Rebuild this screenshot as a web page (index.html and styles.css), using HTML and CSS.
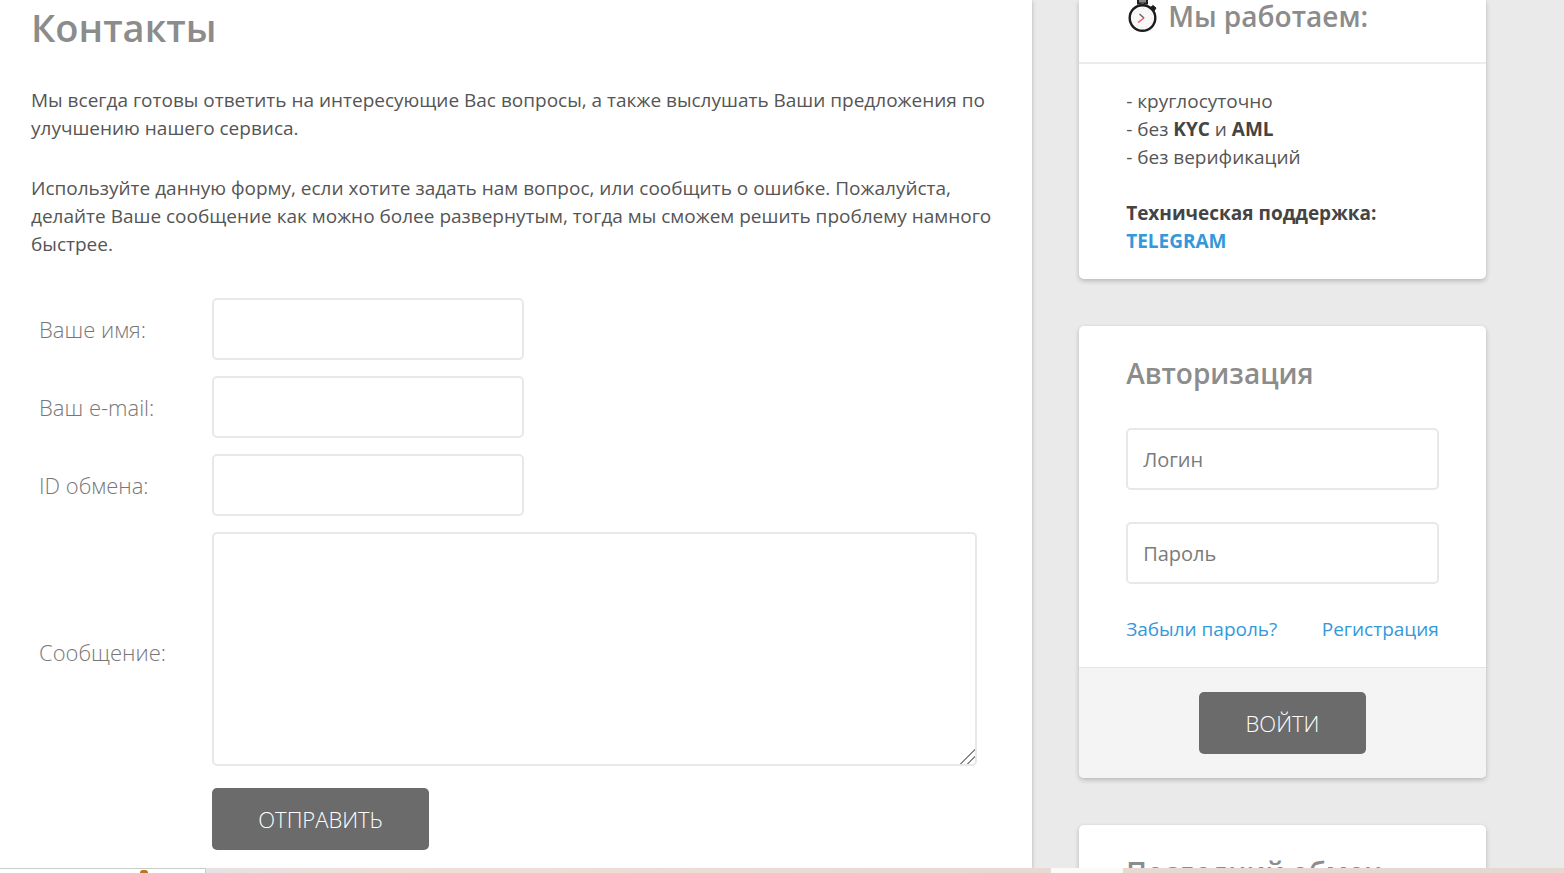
FILE: index.html
```html
<!DOCTYPE html>
<html lang="ru">
<head>
<meta charset="utf-8">
<meta name="viewport" content="width=device-width, initial-scale=1">
<title>Контакты</title>
<link rel="stylesheet" href="styles.css">
</head>
<body>
<div class="viewport">
  <div class="page">
    <main class="content">
      <h1 class="content-title">Контакты</h1>
      <p class="text">Мы всегда готовы ответить на интересующие Вас вопросы, а также выслушать Ваши предложения по улучшению нашего сервиса.</p>
      <p class="text">Используйте данную форму, если хотите задать нам вопрос, или сообщить о ошибке. Пожалуйста, делайте Ваше сообщение как можно более развернутым, тогда мы сможем решить проблему намного быстрее.</p>
      <form class="contact-form">
        <label class="form-label" for="name">Ваше имя:</label>
        <input class="field field-short" id="name" type="text">
        <label class="form-label" for="email">Ваш e-mail:</label>
        <input class="field field-short" id="email" type="email">
        <label class="form-label" for="exchange">ID обмена:</label>
        <input class="field field-short" id="exchange" type="text">
        <label class="form-label" for="message">Сообщение:</label>
        <textarea class="field field-area" id="message"></textarea>
        <button class="button button-send" type="submit">ОТПРАВИТЬ</button>
      </form>
    </main>
    <aside class="sidebar">
      <section class="card card-hours">
        <header class="card-head">
          <svg class="stopwatch" viewBox="0 0 34 34" aria-hidden="true">
            <path d="M12 0v3.500h9v-3.500" fill="#888" stroke="#1c1c1c" stroke-width="2"/>
            <path d="M15 3h3v3h-3z" fill="#555"/>
            <path d="M24.500 7.500l2.500-2 3 2.500-2 3z" fill="#1c1c1c" stroke="#1c1c1c"/>
            <circle cx="16.500" cy="18" r="12.800" fill="#f8f8f8" stroke="#1c1c1c" stroke-width="2.400"/>
            <circle cx="16.500" cy="18" r="9.500" fill="none" stroke="#dcdcdc" stroke-dasharray="1 4"/>
            <path d="M13.500 14l4.500 4" fill="none" stroke="#666" stroke-width="1.500"/>
            <path d="M18 18l-6 4.500" fill="none" stroke="#ee5962" stroke-width="1.500"/>
          </svg>
          <h2 class="card-title">Мы работаем:</h2>
        </header>
        <div class="card-text">
          <p>- круглосуточно<br>- без <b>KYC</b> и <b>AML</b><br>- без верификаций</p>
          <p><b>Техническая поддержка:</b><br><a class="link link-strong" href="#">TELEGRAM</a></p>
        </div>
      </section>
      <form class="card">
        <div class="card-body">
          <h2 class="card-title">Авторизация</h2>
          <div class="login-fields">
            <input class="field" type="text" placeholder="Логин" aria-label="Логин">
            <input class="field" type="password" placeholder="Пароль" aria-label="Пароль">
          </div>
          <div class="login-links">
            <a class="link" href="#">Забыли пароль?</a>
            <a class="link" href="#">Регистрация</a>
          </div>
        </div>
        <footer class="card-foot">
          <button class="button button-login" type="submit">ВОЙТИ</button>
        </footer>
      </form>
      <section class="card">
        <div class="card-body">
          <h2 class="card-title">Последний обмен</h2>
        </div>
      </section>
    </aside>
  </div>
  <div class="bottom-bar">
    <div class="bottom-tab"><span class="bottom-mark"></span></div>
    <div class="bottom-light"></div>
  </div>
</div>
</body>
</html>
```
FILE: styles.css
```css
* { box-sizing: border-box; }

body {
  margin: 0;
  font: 19px/28px "Open Sans", "Noto Sans", sans-serif;
  color: #555;
  background: #eaeaea;
}

h1, h2, p { margin: 0; }

.viewport {
  display: flex;
  flex-direction: column;
  height: 100vh;
  overflow: hidden;
}

.page {
  display: flex;
  flex: 1;
  min-height: 0;
  overflow: hidden;
}

.content {
  flex: 0 0 66%;
  padding: 3px 34px 16px 31px;
  background: #fff;
  box-shadow: 0 1px 4px rgba(0, 0, 0, .25);
}

.content-title {
  margin-bottom: 35px;
  font-size: 38px;
  line-height: 48px;
  font-weight: 600;
  color: #8c8c8c;
}

.text { margin-bottom: 32px; }

.contact-form {
  display: grid;
  grid-template-columns: 173px 1fr;
  gap: 16px 0;
  align-items: center;
  margin-top: 40px;
  padding: 0 21px 0 8px;
}

.form-label {
  font-size: 22px;
  font-weight: 300;
  color: #777;
}

.field {
  display: block;
  width: 100%;
  height: 62px;
  padding: 0 15px;
  border: 2px solid #e8e8e8;
  border-radius: 5px;
  background: #fff;
  font: inherit;
  font-size: 20px;
  color: #555;
}

.field::placeholder { color: #7b7b7b; }

.field-short { width: 312px; }

.field-area {
  height: 234px;
  margin-bottom: 6px;
  padding: 12px 16px;
  resize: both;
}

.field-area::-webkit-resizer {
  background: linear-gradient(135deg, transparent 49%, #888 49% 56%, transparent 56% 72%, #888 72% 79%, transparent 79%);
}

.button {
  height: 62px;
  padding: 0;
  border: 0;
  border-radius: 5px;
  background: #6b6b6b;
  font: inherit;
  font-size: 22px;
  font-weight: 300;
  color: #fff;
}

.button-send {
  grid-column: 2;
  width: 217px;
}

.button-login { width: 167px; }

.sidebar {
  display: flex;
  flex: 1;
  flex-direction: column;
  gap: 47px;
  min-width: 0;
  padding: 0 5% 0 3%;
}

.card {
  border-radius: 5px;
  background: #fff;
  box-shadow: 0 2px 5px rgba(0, 0, 0, .22);
}

.card-hours { border-radius: 0 0 5px 5px; }

.card-head {
  display: flex;
  gap: 8px;
  height: 64px;
  padding: 0 47px 28px;
  border-bottom: 2px solid #ececec;
}

.stopwatch {
  width: 34px;
  height: 34px;
}

.card-title {
  font-size: 28px;
  line-height: 32px;
  font-weight: 600;
  color: #8c8c8c;
}

.card-text {
  display: flex;
  flex-direction: column;
  gap: 28px;
  padding: 23px 47px 24px;
}

.card-text b { color: #444; }

.card-body { padding: 31px 47px 24px; }

.login-fields {
  display: grid;
  gap: 32px;
  margin: 39px 0 31px;
}

.login-links {
  display: flex;
  justify-content: space-between;
}

.link {
  color: #3498db;
  text-decoration: none;
}

.link-strong { font-weight: 700; }

.card-foot {
  display: flex;
  justify-content: center;
  padding: 24px;
  border-top: 1px solid #e6e6e6;
  border-radius: 0 0 5px 5px;
  background: #f4f4f4;
}

.bottom-bar {
  display: flex;
  justify-content: space-between;
  height: 5px;
  padding-right: 28.2%;
  background: linear-gradient(90deg, #e8e2e4 13%, #f0dfd7 25%, #e8dad3 60%, #e5d8d0);
}

.bottom-tab {
  display: flex;
  justify-content: flex-end;
  align-items: flex-end;
  width: 206px;
  padding-right: 57px;
  border: solid #ccc;
  border-width: 1px 1px 0 0;
  background: #fff;
}

.bottom-mark {
  width: 8px;
  height: 3px;
  border-radius: 4px 4px 0 0;
  background: #b8771f;
}

.bottom-light {
  width: 72px;
  background: #fcf9f7;
}
```
